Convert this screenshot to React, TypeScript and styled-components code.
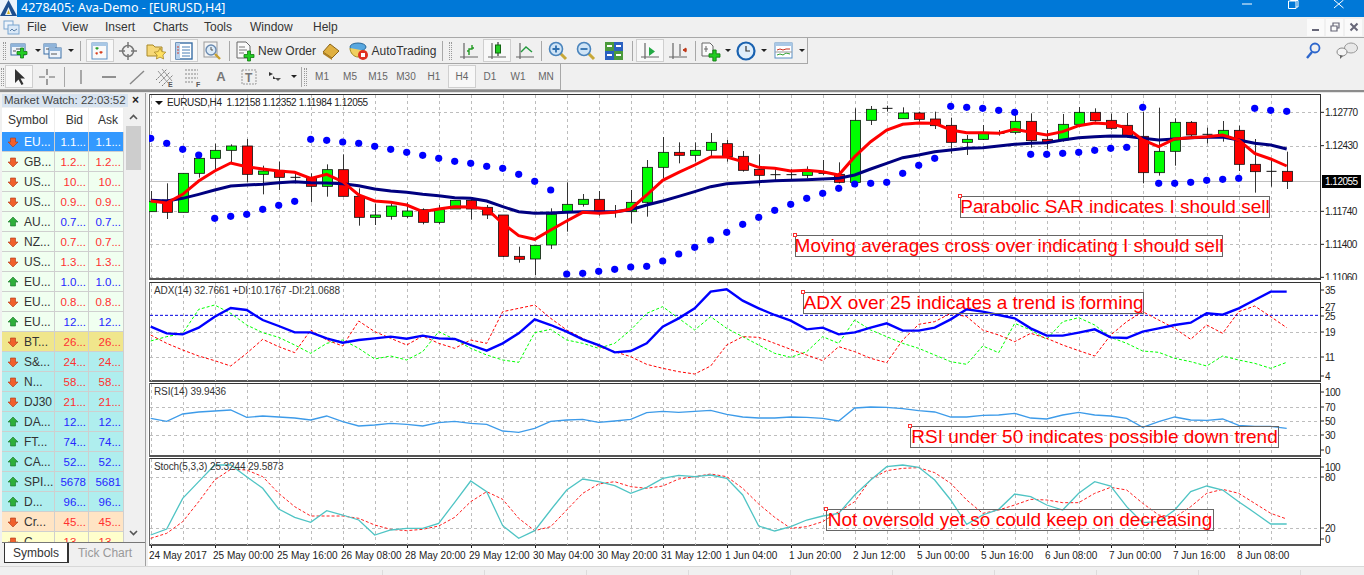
import React from 'react';
import styled, {createGlobalStyle} from 'styled-components';

const GlobalStyle = createGlobalStyle`
  html, body { margin: 0; padding: 0; background: #f0f0f0; }
  body { font-family: "Liberation Sans", Arial, sans-serif; }
`;

const Root = styled.div`
  width: 1364px;
  height: 575px;
  overflow: hidden;
  display: flex;
  flex-direction: column;
  background: #f0f0f0;
  color: #333;
  font-size: 12px;
`;

/* window chrome */
const TitleBar = styled.div`
  height: 17px;
  flex: none;
  background: #0078d7;
  color: #fff;
  display: flex;
  align-items: center;
  font-family: "Noto Sans", sans-serif;
  font-size: 12.5px;
  overflow: hidden;
`;
const TitleText = styled.span`
  margin-left: 4px;
  flex: 1;
  position: relative;
  top: -1px;
`;
const WindowControls = styled.div`
  display: flex;
  align-items: flex-start;
  height: 17px;
  padding-right: 2px;
`;
const WindowButton = styled.div`
  width: 46px;
  height: 17px;
  display: flex;
  justify-content: center;
`;
const MenuBar = styled.div`
  height: 20px;
  flex: none;
  display: flex;
  align-items: center;
  border-bottom: 1px solid #a8a8a8;
  padding-left: 3px;
`;
const MenuItem = styled.span<{$w: number}>`
  width: ${p => p.$w}px;
  font-size: 12px;
  color: #333;
`;
const MdiControls = styled.div`
  margin-left: auto;
  display: flex;
  gap: 2px;
  padding-right: 2px;
`;
const MdiButton = styled.div`
  width: 17px;
  height: 17px;
  background: #fafafa;
  display: flex;
  align-items: center;
  justify-content: center;
`;

/* toolbars */
const ToolRow = styled.div`
  height: 26px;
  flex: none;
  display: flex;
  align-items: center;
`;
const ToolGroup = styled.div`
  display: flex;
  align-items: center;
  height: 26px;
  border-right: 1px solid #a8a8a8;
  border-bottom: 1px solid #a8a8a8;
  box-sizing: border-box;
`;
const Grip = styled.div<{$side?: number}>`
  width: 3px;
  height: 18px;
  margin: 0 ${p => p.$side ?? 3}px;
  flex: none;
  border-left: 1px dotted #999;
  border-right: 1px dotted #999;
  box-sizing: border-box;
`;
const Sep = styled.div<{$w: number}>`
  width: ${p => p.$w}px;
  height: 20px;
  flex: none;
  display: flex;
  justify-content: center;
  &::after {
    content: '';
    width: 1px;
    background: #a8a8a8;
  }
`;
const ToolButton = styled.div<{$w?: number; $on?: boolean}>`
  width: ${p => p.$w ?? 28}px;
  height: 23px;
  flex: none;
  box-sizing: border-box;
  display: flex;
  align-items: center;
  justify-content: center;
  gap: 2px;
  font-size: 12px;
  color: #333;
  white-space: nowrap;
  background: ${p => (p.$on ? '#f8f8f8' : 'transparent')};
  border: 1px solid ${p => (p.$on ? '#cfcfcf' : 'transparent')};
`;
const PeriodButton = styled(ToolButton)`
  font-size: 10px;
  color: #666;
`;
const Caret = styled.span`
  width: 0;
  height: 0;
  margin-left: 2px;
  border-left: 3px solid transparent;
  border-right: 3px solid transparent;
  border-top: 3px solid #222;
`;
const RightTools = styled.div`
  margin-left: auto;
  display: flex;
  align-items: center;
  gap: 15px;
  padding-right: 6px;
`;
const Divider = styled.div`
  height: 3px;
  flex: none;
  border-top: 2px solid #8c8c8c;
  box-sizing: border-box;
  background: #e4e4e4;
`;

/* market watch */
const Main = styled.div`
  flex: none;
  height: 473px;
  display: flex;
`;
const WatchPanel = styled.div`
  width: 146px;
  flex: none;
  margin-right: 2px;
  padding: 1px 0 0 2px;
  box-sizing: border-box;
  border-right: 1px solid #a0a0a0;
  display: flex;
  flex-direction: column;
`;
const WatchHeader = styled.div`
  height: 13px;
  flex: none;
  display: flex;
  align-items: center;
  justify-content: space-between;
  font-size: 11.5px;
  line-height: 13px;
  color: #444;
`;
const WatchTitle = styled.span`
  background: #d7e3f0;
  width: 126px;
  padding-left: 2px;
  box-sizing: border-box;
  white-space: nowrap;
`;
const CloseMark = styled.span`
  font-size: 12px;
  font-weight: bold;
  color: #222;
  margin-right: 6px;
`;
const TableWrap = styled.div`
  height: 434px;
  flex: none;
  margin-top: 1px;
  display: flex;
  overflow: hidden;
  border-bottom: 1px solid #777;
`;
const Table = styled.div`
  width: 122px;
  flex: none;
  overflow: hidden;
`;
const Row = styled.div<{$bg: string}>`
  height: 20px;
  display: grid;
  grid-template-columns: 53px 34px 35px;
  background: ${p => p.$bg};
  box-sizing: border-box;
  border-bottom: 1px solid #cfcfcf;
`;
const HeadRow = styled(Row)`
  height: 24px;
  background: #fff;
  border-bottom: none;
  font-size: 12px;
`;
const HeadCell = styled.div<{$right?: boolean}>`
  display: flex;
  align-items: center;
  justify-content: ${p => (p.$right ? 'flex-end' : 'center')};
  padding-right: ${p => (p.$right ? 5 : 0)}px;
  border-right: 1px solid #eee;
  color: #333;
`;
const SymbolCell = styled.div<{$light: boolean}>`
  display: flex;
  align-items: center;
  gap: 5px;
  padding-left: 5px;
  font-size: 12px;
  color: ${p => (p.$light ? '#fff' : '#333')};
  border-right: 1px solid #cfcfcf;
  white-space: nowrap;
`;
const PriceCell = styled.div<{$color: string}>`
  display: flex;
  align-items: center;
  justify-content: flex-end;
  padding-right: 2px;
  font-size: 11.5px;
  color: ${p => p.$color};
  border-right: 1px solid #cfcfcf;
`;
const ScrollBar = styled.div`
  width: 17px;
  flex: none;
  margin-left: 1px;
  display: flex;
  flex-direction: column;
  background: #f0f0f0;
`;
const ScrollArrow = styled.div`
  height: 18px;
  flex: none;
  display: flex;
  align-items: center;
  justify-content: center;
`;
const ScrollThumb = styled.div`
  height: 44px;
  flex: none;
  background: #cdcdcd;
  margin: 0 1px;
`;
const ScrollGap = styled.div`
  flex: 1;
`;
const Tabs = styled.div`
  display: flex;
  height: 21px;
  flex: none;
  padding-left: 2px;
`;
const Tab = styled.div<{$on?: boolean}>`
  width: ${p => (p.$on ? 65 : 72)}px;
  height: 20px;
  box-sizing: border-box;
  display: flex;
  align-items: center;
  justify-content: center;
  font-size: 12px;
  color: ${p => (p.$on ? '#333' : '#999')};
  background: ${p => (p.$on ? '#fff' : 'transparent')};
  border: ${p => (p.$on ? '1px solid #333' : 'none')};
  border-top: none;
  border-right-width: ${p => (p.$on ? 2 : 0)}px;
`;

/* chart */
const ChartWindow = styled.div`
  flex: 1;
  padding: 1px 0 0 1px;
  display: flex;
  flex-direction: column;
  background: #fff;
  min-width: 0;
`;
const Pane = styled.div<{$h: number; $gap: number}>`
  height: ${p => p.$h}px;
  flex: none;
  margin-bottom: ${p => p.$gap}px;
  display: flex;
`;
const Plot = styled.div`
  width: 1172px;
  flex: none;
  position: relative;
  box-shadow: inset 1px 0 #666, inset -1px 0 #333, inset 0 1px #333, inset 0 -2px #555;
  svg { display: block; }
`;
const Axis = styled.div`
  flex: 1;
  svg { display: block; }
`;
const PlotTitle = styled.div`
  position: absolute;
  left: 6px;
  top: 2px;
  display: flex;
  align-items: center;
  gap: 4px;
  font-size: 10px;
  letter-spacing: -0.35px;
  line-height: 13px;
  color: #222;
  white-space: pre;
`;
const SubTitle = styled.div`
  position: absolute;
  left: 5px;
  top: 3px;
  font-size: 10px;
  letter-spacing: -0.1px;
  line-height: 12px;
  color: #333;
  white-space: pre;
`;
const TitleCaret = styled.span`
  width: 0;
  height: 0;
  border-left: 4px solid transparent;
  border-right: 4px solid transparent;
  border-top: 4px solid #111;
`;
const Note = styled.div<{$x: number; $y: number; $w: number}>`
  position: absolute;
  left: ${p => p.$x}px;
  top: ${p => p.$y}px;
  width: ${p => p.$w}px;
  height: 22px;
  box-sizing: border-box;
  border: 1px solid #666;
  color: #ff0000;
  font-size: 19px;
  line-height: 20px;
  white-space: nowrap;
  display: flex;
  justify-content: center;
  &::before {
    content: '';
    position: absolute;
    left: -3px;
    top: -3px;
    width: 2px;
    height: 2px;
    border: 1px solid #ff3030;
    background: #fff;
  }
`;
const DateAxis = styled.div`
  height: 21px;
  flex: none;
  display: flex;
`;
const DateTick = styled.div`
  width: 64px;
  flex: none;
  position: relative;
  padding-top: 3px;
  font-size: 10px;
  line-height: 13px;
  color: #222;
  white-space: nowrap;
  &::before {
    content: '';
    position: absolute;
    left: 2px;
    top: -1px;
    width: 1px;
    height: 3px;
    background: #222;
  }
`;
const StatusBar = styled.div`
  flex: 1;
  display: flex;
  justify-content: flex-end;
  background: #f0f0f0;
  border-top: 1px solid #d8d8d8;
  padding-top: 3px;
  padding-right: 63px;
`;
const StatusCell = styled.div`
  width: 102px;
  flex: none;
  border-right: 1px solid #dcdcdc;
  box-sizing: border-box;
`;

/* data: all y values are read at 3x from the top of the pane */
type Kind = 'g' | 'r' | 'd';
const CANDLES: [number, number, number, number, Kind][] = [
  [288, 320, 350, 350, 'g'], [265, 315, 352, 372, 'r'], [235, 235, 352, 352, 'g'], [172, 190, 235, 248, 'g'],
  [146, 166, 190, 225, 'g'], [148, 153, 166, 205, 'g'], [132, 153, 238, 262, 'r'], [212, 228, 238, 298, 'g'],
  [200, 226, 247, 285, 'r'], [232, 247, 247, 265, 'd'], [235, 247, 274, 322, 'r'], [208, 224, 274, 305, 'g'],
  [178, 224, 304, 304, 'r'], [280, 304, 367, 392, 'r'], [326, 360, 367, 390, 'g'], [326, 333, 364, 374, 'g'],
  [322, 348, 364, 370, 'g'], [340, 344, 382, 388, 'r'], [330, 344, 382, 388, 'g'], [316, 316, 342, 342, 'g'],
  [308, 316, 342, 374, 'r'], [330, 337, 360, 372, 'r'], [360, 360, 484, 486, 'r'], [455, 484, 493, 503, 'r'],
  [451, 451, 492, 540, 'g'], [340, 358, 450, 462, 'g'], [262, 328, 350, 410, 'g'], [297, 313, 328, 335, 'g'],
  [288, 313, 350, 362, 'r'], [330, 350, 350, 368, 'd'], [285, 322, 350, 385, 'g'], [195, 217, 322, 365, 'g'],
  [126, 172, 217, 250, 'g'], [142, 172, 181, 205, 'r'], [142, 166, 181, 200, 'g'], [114, 142, 166, 185, 'g'],
  [135, 146, 185, 200, 'r'], [168, 184, 226, 230, 'r'], [178, 223, 241, 272, 'r'], [222, 239, 239, 256, 'd'],
  [222, 239, 239, 256, 'd'], [214, 230, 241, 250, 'g'], [195, 235, 235, 240, 'd'], [202, 238, 262, 265, 'r'],
  [40, 76, 262, 262, 'g'], [33, 43, 76, 90, 'g'], [32, 40, 40, 50, 'd'], [37, 54, 71, 71, 'g'],
  [50, 54, 73, 80, 'r'], [50, 72, 92, 102, 'r'], [68, 91, 142, 176, 'r'], [120, 133, 142, 180, 'g'],
  [90, 112, 133, 135, 'g'], [105, 115, 115, 122, 'd'], [50, 79, 112, 118, 'g'], [55, 79, 137, 158, 'r'],
  [105, 133, 142, 162, 'r'], [57, 88, 135, 140, 'g'], [36, 52, 88, 95, 'g'], [40, 52, 77, 80, 'r'],
  [56, 76, 100, 104, 'r'], [54, 91, 122, 128, 'r'], [50, 124, 233, 265, 'r'], [38, 169, 233, 242, 'g'],
  [70, 82, 169, 212, 'g'], [78, 82, 120, 125, 'r'], [98, 118, 118, 145, 'd'], [78, 106, 125, 140, 'g'],
  [92, 106, 208, 228, 'r'], [132, 208, 230, 293, 'r'], [195, 229, 229, 275, 'd'], [170, 229, 259, 282, 'r'],
];
const MA_FAST = [318, 324, 298, 258, 228, 204, 215, 222, 228, 232, 250, 238, 260, 300, 318, 322, 330, 350, 342, 335, 336, 342, 385, 422, 433, 405, 378, 352, 355, 352, 342, 300, 256, 232, 210, 186, 186, 200, 217, 220, 228, 226, 230, 240, 185, 140, 105, 88, 84, 85, 105, 113, 113, 115, 103, 112, 120, 110, 92, 84, 87, 98, 135, 155, 132, 128, 125, 120, 135, 175, 192, 213];
const MA_SLOW = [316, 318, 310, 298, 285, 273, 270, 268, 263, 260, 263, 264, 266, 272, 282, 288, 292, 298, 302, 308, 310, 318, 335, 350, 355, 354, 352, 350, 350, 350, 344, 330, 318, 304, 290, 275, 266, 263, 260, 257, 256, 254, 252, 250, 240, 222, 205, 188, 180, 170, 165, 160, 158, 153, 148, 145, 143, 135, 128, 125, 123, 124, 130, 135, 132, 128, 127, 126, 135, 145, 150, 162];
const SAR = [130, 145, 163, 180, 370, 364, 358, 343, 331, 319, 133, 136, 141, 145, 154, 163, 172, 181, 190, 199, 205, 214, 220, 238, 259, 285, 537, 535, 529, 523, 516, 514, 498, 477, 457, 435, 412, 388, 367, 346, 328, 310, 295, 280, 267, 265, 262, 235, 211, 190, 34, 37, 40, 46, 52, 178, 178, 175, 172, 166, 160, 157, 37, 265, 265, 262, 256, 253, 250, 40, 46, 49];
const ADX = [140, 160, 163, 143, 110, 84, 90, 120, 138, 157, 157, 175, 188, 180, 175, 170, 176, 167, 175, 177, 195, 212, 190, 160, 118, 135, 155, 178, 195, 217, 213, 190, 140, 115, 85, 35, 28, 62, 85, 105, 122, 148, 143, 163, 157, 143, 130, 152, 152, 143, 118, 88, 95, 105, 115, 145, 167, 167, 158, 148, 172, 174, 155, 145, 135, 128, 100, 104, 85, 60, 35, 35];
const DI_PLUS = [183, 170, 160, 88, 75, 100, 135, 158, 172, 195, 220, 190, 180, 205, 237, 228, 240, 215, 155, 178, 205, 225, 240, 247, 158, 148, 180, 190, 205, 190, 150, 100, 80, 115, 150, 110, 145, 170, 195, 220, 232, 215, 170, 190, 120, 150, 170, 190, 205, 225, 245, 253, 198, 218, 130, 150, 178, 125, 113, 135, 172, 190, 213, 217, 235, 245, 258, 228, 240, 250, 265, 247];
const DI_MINUS = [165, 190, 210, 228, 242, 258, 220, 178, 200, 218, 150, 180, 198, 123, 155, 175, 195, 168, 190, 205, 180, 190, 95, 85, 75, 115, 150, 175, 200, 215, 230, 253, 265, 275, 282, 258, 195, 170, 172, 190, 208, 225, 242, 200, 215, 235, 248, 180, 133, 125, 100, 110, 150, 165, 185, 160, 175, 195, 212, 228, 165, 125, 95, 120, 145, 178, 135, 160, 95, 78, 110, 143];
const RSI = [415, 424, 402, 396, 393, 390, 412, 408, 411, 414, 420, 408, 425, 438, 435, 430, 433, 438, 428, 424, 430, 433, 453, 457, 445, 424, 420, 418, 427, 423, 418, 398, 394, 397, 394, 391, 403, 411, 414, 414, 411, 412, 415, 423, 384, 381, 382, 386, 392, 396, 411, 411, 406, 405, 400, 414, 417, 405, 397, 405, 408, 415, 442, 425, 411, 420, 421, 417, 436, 439, 439, 445];
const STOCH = [765, 747, 655, 605, 555, 555, 590, 625, 687, 712, 727, 692, 705, 720, 765, 750, 745, 745, 730, 667, 603, 635, 737, 775, 752, 690, 630, 597, 605, 617, 640, 622, 595, 586, 590, 585, 595, 645, 738, 753, 740, 720, 708, 700, 645, 600, 560, 555, 562, 600, 660, 733, 705, 688, 642, 650, 675, 690, 640, 605, 618, 680, 728, 725, 690, 635, 618, 630, 665, 698, 732, 732];
const SIGNAL = [775, 760, 725, 665, 600, 568, 570, 590, 640, 680, 708, 708, 708, 715, 735, 748, 752, 748, 738, 712, 665, 635, 658, 715, 752, 740, 690, 640, 612, 605, 620, 625, 618, 597, 590, 582, 590, 625, 672, 712, 745, 740, 725, 695, 665, 598, 572, 565, 563, 578, 610, 660, 700, 690, 675, 658, 660, 668, 668, 640, 622, 630, 670, 705, 712, 680, 640, 628, 640, 670, 700, 717];

const WATCH: [string, string, string, 'u' | 'd', string][] = [
  ['EU...', '1.1...', '1.1...', 'd', '#3399ff'],
  ['GB...', '1.2...', '1.2...', 'd', '#f0fff0'],
  ['US...', '10...', '10...', 'd', '#f0fff0'],
  ['US...', '0.9...', '0.9...', 'd', '#f0fff0'],
  ['AU...', '0.7...', '0.7...', 'u', '#f0fff0'],
  ['NZ...', '0.7...', '0.7...', 'd', '#f0fff0'],
  ['US...', '1.3...', '1.3...', 'd', '#f0fff0'],
  ['EU...', '1.0...', '1.0...', 'u', '#f0fff0'],
  ['EU...', '0.8...', '0.8...', 'd', '#f0fff0'],
  ['EU...', '12...', '12...', 'u', '#f0fff0'],
  ['BT...', '26...', '26...', 'd', '#f0e68c'],
  ['S&...', '24...', '24...', 'd', '#afeeee'],
  ['N...', '58...', '58...', 'd', '#afeeee'],
  ['DJ30', '21...', '21...', 'd', '#afeeee'],
  ['DA...', '12...', '12...', 'u', '#afeeee'],
  ['FT...', '74...', '74...', 'u', '#afeeee'],
  ['CA...', '52...', '52...', 'u', '#afeeee'],
  ['SPI...', '5678', '5681', 'u', '#afeeee'],
  ['D...', '96...', '96...', 'u', '#afeeee'],
  ['Cr...', '45...', '45...', 'd', '#ffe4c4'],
  ['C...', '13...', '13...', 'd', '#ffffcc'],
];
const DATES = ['24 May 2017', '25 May 00:00', '25 May 16:00', '26 May 08:00', '28 May 20:00', '29 May 12:00', '30 May 04:00', '30 May 20:00', '31 May 12:00', '1 Jun 04:00', '1 Jun 20:00', '2 Jun 12:00', '5 Jun 00:00', '5 Jun 16:00', '6 Jun 08:00', '7 Jun 00:00', '7 Jun 16:00', '8 Jun 08:00'];

const cx = (i: number) => 150.7 + 16 * i;
const points = (data: number[], base: number) =>
  data.map((z, i) => `${cx(i)},${base + z / 3}`).join(' ');
const crisp = (v: number) => Math.round(v) + 0.5;

function Grid({top, bottom, rows}: {top: number; bottom: number; rows: number[]}) {
  const cols = Array.from({length: 36}, (_, k) => crisp(150.7 + 32 * k));
  return (
    <g stroke="#bdbdbd" strokeWidth="1" strokeDasharray="3 3" shapeRendering="crispEdges">
      {cols.map(x => <line key={x} x1={x} x2={x} y1={top} y2={bottom} />)}
      {rows.map(y => <line key={y} x1={150} x2={1320} y1={crisp(y)} y2={crisp(y)} />)}
    </g>
  );
}

function PlotSvg({top, height, children}: {top: number; height: number; children: React.ReactNode}) {
  return (
    <svg width="1172" height={height} viewBox={`149 ${top} 1172 ${height}`}>
      {children}
    </svg>
  );
}

function AxisLabel({text, y, fill = '#222'}: {text: string; y: number; fill?: string}) {
  return (
    <text x="1325" y={y + 3.5} fontSize="10" letterSpacing="-0.5" fill={fill} fontFamily="Liberation Sans">{text}</text>
  );
}

function AxisSvg({top, height, labels}: {top: number; height: number; labels: [string, number][]}) {
  return (
    <Axis>
      <svg width="43" height={height} viewBox={`1321 ${top} 43 ${height}`}>
        {labels.map(([text, y]) => (
          <g key={text}>
            <line x1="1320" x2="1324" y1={y} y2={y} stroke="#222" />
            <AxisLabel text={text} y={y} />
          </g>
        ))}
      </svg>
    </Axis>
  );
}

function PricePlot() {
  const base = 95;
  const y = (z: number) => base + z / 3;
  return (
    <PlotSvg top={94} height={186}>
      <Grid top={95} bottom={279} rows={[52, 152, 349, 448, 547].map(y)} />
      <line x1="150" x2="1320" y1={crisp(y(259))} y2={crisp(y(259))} stroke="#c0c0c0" />
      {CANDLES.map(([hi, t, b, lo, kind], i) => {
        const x = Math.round(cx(i)) + 0.5;
        return (
          <g key={i}>
            <line x1={x} x2={x} y1={y(hi)} y2={y(lo)} stroke="#333" />
            {kind === 'd'
              ? <line x1={x - 5} x2={x + 5} y1={y(t)} y2={y(t)} stroke="#111" />
              : <rect x={x - 5} y={y(t)} width="10" height={Math.max((b - t) / 3, 1)} fill={kind === 'g' ? '#00ff00' : '#ff0000'} stroke="#111" strokeWidth="0.8" />}
          </g>
        );
      })}
      <polyline points={points(MA_SLOW, base)} fill="none" stroke="#000080" strokeWidth="3" />
      <polyline points={points(MA_FAST, base)} fill="none" stroke="#ff0000" strokeWidth="3" />
      {SAR.map((z, i) => <circle key={i} cx={cx(i)} cy={y(z)} r="3.6" fill="#0000ff" />)}
    </PlotSvg>
  );
}

function PriceAxis() {
  const y = (z: number) => 95 + z / 3;
  return (
    <Axis>
      <svg width="43" height="186" viewBox="1321 94 43 186">
        {([['1.12770', 52], ['1.12430', 152], ['1.11740', 349], ['1.11400', 448], ['1.11060', 547]] as [string, number][]).map(([t, z]) => (
          <g key={t}>
            <line x1="1320" x2="1324" y1={y(z)} y2={y(z)} stroke="#222" />
            <AxisLabel text={t} y={y(z)} />
          </g>
        ))}
        <rect x="1322" y="175" width="39" height="13" fill="#000" />
        <AxisLabel text="1.12055" y={181.500} fill="#fff" />
      </svg>
    </Axis>
  );
}

function AdxPlot() {
  const base = 280;
  const y = (z: number) => base + z / 3;
  return (
    <PlotSvg top={282} height={100}>
      <Grid top={283} bottom={381} rows={[157, 232].map(y)} />
      <line x1="150" x2="1320" y1={y(106)} y2={y(106)} stroke="#0000e0" strokeDasharray="3 2" />
      <polyline points={points(DI_PLUS, base)} fill="none" stroke="#00ff00" strokeDasharray="3 2" />
      <polyline points={points(DI_MINUS, base)} fill="none" stroke="#ff0000" strokeDasharray="3 2" />
      <polyline points={points(ADX, base)} fill="none" stroke="#0000ff" strokeWidth="2.4" />
    </PlotSvg>
  );
}

function RsiPlot() {
  const base = 280;
  const y = (z: number) => base + z / 3;
  return (
    <PlotSvg top={383} height={74}>
      <Grid top={384} bottom={456} rows={[381, 424, 466].map(y)} />
      <polyline points={points(RSI, base)} fill="none" stroke="#3d9be9" strokeWidth="1.3" />
    </PlotSvg>
  );
}

function StochPlot() {
  const base = 280;
  const y = (z: number) => base + z / 3;
  return (
    <PlotSvg top={458} height={88}>
      <Grid top={459} bottom={545} rows={[592, 744].map(y)} />
      <polyline points={points(SIGNAL, base)} fill="none" stroke="#ff2020" strokeDasharray="3 2" />
      <polyline points={points(STOCH, base)} fill="none" stroke="#4fc4c4" strokeWidth="1.3" />
    </PlotSvg>
  );
}

/* icons */
const Svg = ({w = 22, children}: {w?: number; children: React.ReactNode}) => (
  <svg width={w} height="22" viewBox={`0 0 ${w} 22`} style={{flex: 'none'}}>{children}</svg>
);
const Plus = ({x, y, s = 1}: {x: number; y: number; s?: number}) => (
  <path transform={`translate(${x} ${y}) scale(${s})`} d="M3.5 0h3v3.5H10v3H6.5V10h-3V6.5H0v-3h3.5z" fill="#22cc22" stroke="#127a12" strokeWidth="0.8" />
);
const WindowShape = ({x, y, w, h}: {x: number; y: number; w: number; h: number}) => (
  <g>
    <rect x={x} y={y} width={w} height={h} fill="#eef4fb" stroke="#3a6ea5" />
    <rect x={x} y={y} width={w} height="3" fill="#8fb4da" />
  </g>
);
const IconNewChart = () => (
  <Svg><WindowShape x={2} y={4} w={14} h={11} /><path d="M4 11h3M7 9h4" stroke="#555" /><Plus x={8} y={8} /></Svg>
);
const IconProfiles = () => (
  <Svg><WindowShape x={2} y={4} w={12} h={10} /><WindowShape x={7} y={8} w={12} h={10} /><path d="M4 9h3M9 14h6" stroke="#555" /></Svg>
);
const IconMarketWatch = () => (
  <Svg><rect x="3" y="3" width="15" height="16" fill="#fafafa" stroke="#5a8fc4" /><rect x="3" y="3" width="15" height="3" fill="#a9c8e6" /><path d="M6 8l2-1 2 1-2 2z" fill="#2aa02a" /><path d="M10 12l2-1 2 1-2 2z" fill="#d84020" /><path d="M6 13l2-1 1 1-1 2z" fill="#d84020" /></Svg>
);
const IconNavigator = () => (
  <Svg><circle cx="11" cy="11" r="5.5" fill="none" stroke="#777" strokeWidth="1.5" /><path d="M11 2v6M11 14v6M2 11h6M14 11h6" stroke="#777" strokeWidth="1.5" /></Svg>
);
const IconFavorites = () => (
  <Svg><path d="M2 5h6l2 2h7v9H2z" fill="#f6d878" stroke="#a88828" /><path d="M15 8l1.8 3.6 4 .6-2.9 2.8.7 4-3.6-1.9-3.6 1.9.7-4-2.9-2.8 4-.6z" fill="#ffe060" stroke="#a88828" strokeWidth="0.8" /></Svg>
);
const IconTerminal = () => (
  <Svg><rect x="3" y="3" width="16" height="16" fill="#fff" stroke="#3a6ea5" strokeWidth="1.4" /><rect x="3" y="3" width="4" height="16" fill="#b8d0ea" /><path d="M9 7h8M9 10h8M9 13h8M9 16h8" stroke="#4a7fb5" /><path d="M4 7h2M4 10h2M4 13h2" stroke="#d04030" /></Svg>
);
const IconTester = () => (
  <Svg><rect x="3" y="2" width="13" height="15" fill="#f4f4f4" stroke="#999" /><circle cx="10" cy="10" r="5" fill="#dcebf8" stroke="#6a8ab0" strokeWidth="1.4" /><path d="M10 7v3h2" stroke="#555" fill="none" /><path d="M14 14l5 5" stroke="#c8a030" strokeWidth="2.4" /></Svg>
);
const IconNewOrder = () => (
  <Svg><path d="M3 2h9l4 4v12H3z" fill="#fafafa" stroke="#666" /><path d="M5 7h6M5 10h8M5 13h5" stroke="#777" /><Plus x={10} y={11} /></Svg>
);
const IconExpert = () => (
  <Svg><path d="M3 12l7-8 9 7-7 7z" fill="#e0b040" stroke="#8a6418" /><path d="M3 12l9 6v2l-9-6z" fill="#b08020" /></Svg>
);
const IconAutoTrading = () => (
  <Svg><ellipse cx="10" cy="7" rx="8" ry="4" fill="#58a8e0" stroke="#28689a" /><path d="M2 8c0 5 4 9 8 9s7-3 8-6" fill="#f0d060" stroke="#a08820" /><circle cx="15" cy="15" r="5" fill="#e03020" /><rect x="13" y="13" width="4" height="4" fill="#fff" /></Svg>
);
const Axes = () => <path d="M6 3v16M2 17h18" stroke="#666" strokeWidth="1.2" fill="none" />;
const IconBars = () => (
  <Svg><Axes /><path d="M11 15v-6h3V5M9 11h2M14 8h2" stroke="#229922" strokeWidth="1.4" fill="none" /></Svg>
);
const IconCandles = () => (
  <Svg><Axes /><path d="M12 2v14" stroke="#111" /><rect x="9.5" y="5" width="5" height="8" fill="#22cc22" stroke="#116611" /></Svg>
);
const IconLine = () => (
  <Svg><Axes /><path d="M7 12l5-5 6 5" stroke="#22993c" strokeWidth="1.4" fill="none" /></Svg>
);
const Magnifier = ({sign}: {sign: 'in' | 'out'}) => (
  <Svg>
    <path d="M13 13l6 6" stroke="#c8a838" strokeWidth="3" />
    <circle cx="9" cy="9" r="6.5" fill="#cfe4f6" stroke="#4a84bc" strokeWidth="1.6" />
    <path d={sign === 'in' ? 'M5.5 9h7M9 5.5v7' : 'M5.5 9h7'} stroke="#2f6fae" strokeWidth="1.8" />
  </Svg>
);
const IconTile = () => (
  <Svg>
    <rect x="2" y="2" width="9" height="9" fill="#4a9a3a" /><rect x="11" y="2" width="9" height="9" fill="#2a60c0" />
    <rect x="2" y="11" width="9" height="9" fill="#2a60c0" /><rect x="11" y="11" width="9" height="9" fill="#4a9a3a" />
    <path d="M4 6h5M13 6h5M4 15h5M13 15h5" stroke="#fff" strokeWidth="2" />
  </Svg>
);
const IconAutoScroll = () => (
  <Svg><Axes /><path d="M10 7l6 4.500-6 4.500z" fill="#22aa44" /></Svg>
);
const IconShift = () => (
  <Svg><Axes /><path d="M13 4v12" stroke="#555" /><path d="M20 10h-4M16 10l3-2v4z" fill="#c03818" stroke="#c03818" /></Svg>
);
const IconIndicators = () => (
  <Svg><path d="M3 3h8l3 3v10H3z" fill="#fafafa" stroke="#666" /><path d="M7 6v6M5 9h4" stroke="#666" /><Plus x={10} y={10} s={1.1} /></Svg>
);
const IconClock = () => (
  <Svg>
    <circle cx="11" cy="11" r="8.500" fill="#dfeefb" stroke="#1a62b0" strokeWidth="2.2" />
    <path d="M11 6v5h4" stroke="#333" strokeWidth="1.2" fill="none" />
  </Svg>
);
const IconTemplates = () => (
  <Svg>
    <rect x="2" y="3" width="17" height="15" fill="#fff" stroke="#5a8fc4" />
    <rect x="2" y="3" width="17" height="3" fill="#a9c8e6" />
    <path d="M4 10l3-1 3 1 3-1 4 0" stroke="#c83020" fill="none" />
    <path d="M4 15l3-1 3 1 3-2 4 1" stroke="#30a030" fill="none" />
    <path d="M2 12h17" stroke="#999" />
  </Svg>
);
const IconCursor = () => (
  <Svg><path d="M7 3v14l3.500-3.500 3 5.500 2-1-3-5.500H17z" fill="#333" /></Svg>
);
const IconCross = () => (
  <Svg><path d="M11 3v6M11 13v6M3 11h6M13 11h6" stroke="#666" strokeWidth="1.2" /></Svg>
);
const IconVLine = () => <Svg><path d="M11 4v14" stroke="#888" strokeWidth="1.4" /></Svg>;
const IconHLine = () => <Svg><path d="M4 11h14" stroke="#666" strokeWidth="1.4" /></Svg>;
const IconTrend = () => <Svg><path d="M4 18L18 5" stroke="#888" strokeWidth="1.4" /></Svg>;
const IconChannel = () => (
  <Svg><path d="M2 14L13 3M5 17L16 6M8 20L19 9" stroke="#777" fill="none" strokeDasharray="2 1" /><path d="M4 5l10 12M8 3l10 12" stroke="#999" /><text x="14" y="21" fontSize="7" fontWeight="bold" fill="#555" fontFamily="Liberation Sans">E</text></Svg>
);
const IconFibo = () => (
  <Svg><path d="M3 4h13M3 8h13M3 12h13M3 16h9" stroke="#888" strokeDasharray="2 1" /><text x="14" y="21" fontSize="7" fontWeight="bold" fill="#555" fontFamily="Liberation Sans">F</text></Svg>
);
const IconTextLabel = () => (
  <Svg><rect x="4" y="4" width="14" height="14" fill="none" stroke="#999" strokeDasharray="2 1" /><text x="7" y="16" fontSize="12" fontWeight="bold" fill="#777" fontFamily="Liberation Sans">T</text></Svg>
);
const IconArrows = () => (
  <Svg><path d="M4 6l4 2-4 2zM8 10l3 3-3 0z" fill="#333" /><path d="M10 12h6l-3 3z" fill="#555" /></Svg>
);
const ArrowIcon = ({dir}: {dir: 'u' | 'd'}) => (
  <svg width="12" height="12" viewBox="0 0 12 12" style={{flex: 'none'}}>
    {dir === 'u'
      ? <path d="M6 1l5 5H8.500v4h-5V6H1z" fill="#2eae3a" stroke="#16702a" strokeWidth="0.6" />
      : <path d="M3.500 2h5v4H11l-5 5-5-5h2.500z" fill="#f0602c" stroke="#b03814" strokeWidth="0.6" />}
  </svg>
);
const Logo = () => (
  <svg width="17" height="17" viewBox="0 0 17 17" style={{flex: 'none'}}>
    <rect width="17" height="17" fill="#eaf3fb" />
    <path d="M8.500 0L17 16H0z" fill="#1d4f8e" />
    <path d="M8.500 7l3.500 8H5z" fill="#e8f0f0" />
    <path d="M8.500 10l1.500 4H7z" fill="#d6b020" />
  </svg>
);

function WatchList() {
  return (
    <WatchPanel>
      <WatchHeader>
        <WatchTitle>Market Watch: 22:03:52</WatchTitle>
        <CloseMark>×</CloseMark>
      </WatchHeader>
      <TableWrap>
        <Table>
          <HeadRow $bg="#fff">
            <HeadCell>Symbol</HeadCell>
            <HeadCell $right>Bid</HeadCell>
            <HeadCell $right>Ask</HeadCell>
          </HeadRow>
          {WATCH.map(([sym, bid, ask, dir, bg], i) => {
            const color = i === 0 ? '#fff' : dir === 'u' ? '#2626ff' : '#ff3030';
            return (
              <Row key={i} $bg={bg}>
                <SymbolCell $light={i === 0}><ArrowIcon dir={dir} />{sym}</SymbolCell>
                <PriceCell $color={color}>{bid}</PriceCell>
                <PriceCell $color={color}>{ask}</PriceCell>
              </Row>
            );
          })}
        </Table>
        <ScrollBar>
          <ScrollArrow>
            <svg width="9" height="6" viewBox="0 0 9 6"><path d="M1 5l3.500-3.500L8 5" fill="none" stroke="#555" strokeWidth="1.6" /></svg>
          </ScrollArrow>
          <ScrollThumb />
          <ScrollGap />
          <ScrollArrow>
            <svg width="9" height="6" viewBox="0 0 9 6"><path d="M1 1l3.500 3.500L8 1" fill="none" stroke="#555" strokeWidth="1.6" /></svg>
          </ScrollArrow>
        </ScrollBar>
      </TableWrap>
      <Tabs>
        <Tab $on>Symbols</Tab>
        <Tab>Tick Chart</Tab>
      </Tabs>
    </WatchPanel>
  );
}

export default function App() {
  return (
    <Root>
      <GlobalStyle />
      <TitleBar>
        <Logo />
        <TitleText>4278405: Ava-Demo - [EURUSD,H4]</TitleText>
        <WindowControls>
          <WindowButton><svg width="12" height="17" viewBox="0 0 12 17"><path d="M1 4h10" stroke="#fff" /></svg></WindowButton>
          <WindowButton><svg width="12" height="17" viewBox="0 0 12 17"><path d="M1.500 1h7.500v7.500H1.500zM3.500 1V.500H11V7H9" fill="none" stroke="#fff" /></svg></WindowButton>
          <WindowButton><svg width="12" height="17" viewBox="0 0 12 17"><path d="M1 0l9.500 8M10.500 0L1 8" stroke="#fff" /></svg></WindowButton>
        </WindowControls>
      </TitleBar>

      <MenuBar>
        <svg width="17" height="17" viewBox="0 0 17 17" style={{flex: 'none', marginRight: 7}}>
          <rect x="1" y="2" width="9" height="8" fill="#eef4fb" stroke="#7aa5d0" />
          <rect x="5" y="6" width="11" height="9" fill="#dbe9f7" stroke="#7aa5d0" />
          <path d="M7 12l2-2 2 2 3-2" stroke="#5a7fa8" fill="none" />
        </svg>
        <MenuItem $w={35}>File</MenuItem>
        <MenuItem $w={43}>View</MenuItem>
        <MenuItem $w={48}>Insert</MenuItem>
        <MenuItem $w={51}>Charts</MenuItem>
        <MenuItem $w={46}>Tools</MenuItem>
        <MenuItem $w={63}>Window</MenuItem>
        <MenuItem $w={40}>Help</MenuItem>
        <MdiControls>
          <MdiButton><svg width="10" height="10" viewBox="0 0 10 10"><path d="M1 8h7" stroke="#667" strokeWidth="2" /></svg></MdiButton>
          <MdiButton><svg width="10" height="10" viewBox="0 0 10 10"><path d="M1 4h6v5H1zM3 4V1h6v5H7" fill="none" stroke="#667" strokeWidth="1.2" /></svg></MdiButton>
          <MdiButton><svg width="10" height="10" viewBox="0 0 10 10"><path d="M1.500 1.500l7 7M8.500 1.500l-7 7" stroke="#667" strokeWidth="2" /></svg></MdiButton>
        </MdiControls>
      </MenuBar>

      <ToolRow>
        <ToolGroup>
          <Grip />
          <ToolButton $w={32}><IconNewChart /><Caret /></ToolButton>
          <ToolButton $w={34}><IconProfiles /><Caret /></ToolButton>
          <Sep $w={11} />
          <ToolButton $on><IconMarketWatch /></ToolButton>
          <ToolButton><IconNavigator /></ToolButton>
          <ToolButton><IconFavorites /></ToolButton>
          <ToolButton $on><IconTerminal /></ToolButton>
          <ToolButton><IconTester /></ToolButton>
          <Sep $w={7} />
          <ToolButton $w={84}><IconNewOrder />New Order</ToolButton>
          <ToolButton><IconExpert /></ToolButton>
          <ToolButton $w={94}><IconAutoTrading />AutoTrading</ToolButton>
          <Sep $w={7} />
          <Grip />
          <ToolButton><IconBars /></ToolButton>
          <ToolButton $on><IconCandles /></ToolButton>
          <ToolButton><IconLine /></ToolButton>
          <Sep $w={5} />
          <ToolButton><Magnifier sign="in" /></ToolButton>
          <ToolButton><Magnifier sign="out" /></ToolButton>
          <ToolButton><IconTile /></ToolButton>
          <Sep $w={8} />
          <ToolButton $on><IconAutoScroll /></ToolButton>
          <ToolButton><IconShift /></ToolButton>
          <Sep $w={6} />
          <ToolButton $w={34}><IconIndicators /><Caret /></ToolButton>
          <ToolButton $w={38}><IconClock /><Caret /></ToolButton>
          <ToolButton $w={37}><IconTemplates /><Caret /></ToolButton>
        </ToolGroup>
        <RightTools>
          <svg width="16" height="18" viewBox="0 0 16 18">
            <circle cx="10" cy="6" r="4.500" fill="none" stroke="#2d66cc" strokeWidth="1.8" />
            <path d="M7 10l-5 6" stroke="#2d66cc" strokeWidth="2.400" />
          </svg>
          <svg width="22" height="18" viewBox="0 0 22 18">
            <ellipse cx="15" cy="6" rx="6.500" ry="5" fill="#e8e8e8" stroke="#999" />
            <ellipse cx="6" cy="10" rx="5" ry="4" fill="#f4f4f4" stroke="#888" />
            <path d="M4 13l0 4 3-3z" fill="#666" />
          </svg>
        </RightTools>
      </ToolRow>

      <ToolRow>
        <ToolGroup>
          <Grip $side={1} />
          <ToolButton $on><IconCursor /></ToolButton>
          <ToolButton><IconCross /></ToolButton>
          <Sep $w={6} />
          <ToolButton><IconVLine /></ToolButton>
          <ToolButton><IconHLine /></ToolButton>
          <ToolButton><IconTrend /></ToolButton>
          <ToolButton><IconChannel /></ToolButton>
          <ToolButton><IconFibo /></ToolButton>
          <ToolButton><b style={{color: '#777', fontSize: 13}}>A</b></ToolButton>
          <ToolButton><IconTextLabel /></ToolButton>
          <ToolButton $w={36}><IconArrows /><Caret /></ToolButton>
          <Sep $w={4} />
          <Grip $side={1} />
          {['M1', 'M5', 'M15', 'M30', 'H1'].map(p => <PeriodButton key={p}>{p}</PeriodButton>)}
          <PeriodButton $on>H4</PeriodButton>
          {['D1', 'W1', 'MN'].map(p => <PeriodButton key={p}>{p}</PeriodButton>)}
        </ToolGroup>
      </ToolRow>

      <Divider />

      <Main>
        <WatchList />
        <ChartWindow>
          <Pane $h={186} $gap={2}>
            <Plot>
              <PricePlot />
              <PlotTitle><TitleCaret />{'EURUSD,H4  1.12158 1.12352 1.11984 1.12055'}</PlotTitle>
              <Note $x={811} $y={102} $w={310}>Parabolic SAR indicates I should sell</Note>
              <Note $x={646} $y={141} $w={428}>Moving averages cross over indicating I should sell</Note>
            </Plot>
            <PriceAxis />
          </Pane>
          <Pane $h={100} $gap={1}>
            <Plot>
              <AdxPlot />
              <SubTitle>ADX(14) 32.7661 +DI:10.1767 -DI:21.0688</SubTitle>
              <Note $x={654} $y={10} $w={341}>ADX over 25 indicates a trend is forming</Note>
            </Plot>
            <AxisSvg top={282} height={100} labels={[['35', 290], ['27', 307.500], ['25', 316], ['19', 332], ['11', 357], ['4', 376]]} />
          </Pane>
          <Pane $h={74} $gap={1}>
            <Plot>
              <RsiPlot />
              <SubTitle>RSI(14) 39.9436</SubTitle>
              <Note $x={761} $y={43} $w={369}>RSI under 50 indicates possible down trend</Note>
            </Plot>
            <AxisSvg top={383} height={74} labels={[['100', 392], ['70', 407], ['50', 421], ['30', 435], ['0', 450]]} />
          </Pane>
          <Pane $h={88} $gap={0}>
            <Plot>
              <StochPlot />
              <SubTitle>Stoch(5,3,3) 25.3244 29.5873</SubTitle>
              <Note $x={677} $y={51} $w={388}>Not oversold yet so could keep on decreasing</Note>
            </Plot>
            <AxisSvg top={458} height={88} labels={[['100', 467], ['80', 477], ['20', 528], ['0', 539]]} />
          </Pane>
          <DateAxis>
            {DATES.map(d => <DateTick key={d}>{d}</DateTick>)}
          </DateAxis>
        </ChartWindow>
      </Main>

      <StatusBar>
        {Array.from({length: 10}, (_, i) => <StatusCell key={i} />)}
      </StatusBar>
    </Root>
  );
}
